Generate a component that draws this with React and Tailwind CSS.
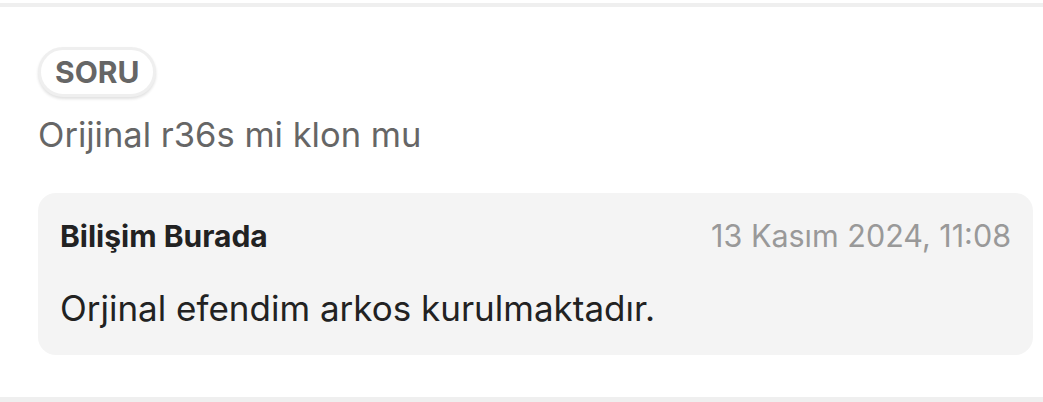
import React from "react";

const App = () => {
    return (
        <div className="w-[1043px] h-[402px] bg-white overflow-hidden font-['Inter',sans-serif]">
            <div className="mt-[3px] h-[4px] bg-[#efefef]" />
            <div className="pl-[38px] pr-[10px] pt-[40px] pb-[42px]">
                <span className="inline-flex items-center justify-center h-[50px] px-[14px] rounded-full bg-white border-[3px] border-[#efefef] shadow-[0_2px_3px_rgba(0,0,0,0.12)] text-[30px] font-bold text-[#666] leading-none">
                    SORU
                </span>
                <p className="mt-[18px] text-[34.5px] leading-[40px] text-[#666]">
                    Orijinal r36s mi klon mu
                </p>
                <div className="mt-[38px] h-[162px] bg-[#f4f4f4] rounded-[18px] px-[22px] pt-[25px]">
                    <div className="flex items-center justify-between h-[36px]">
                        <span className="text-[30px] leading-[36px] font-bold text-[#222]">Bilişim Burada</span>
                        <span className="text-[30.5px] leading-[36px] text-[#999]">13 Kasım 2024, 11:08</span>
                    </div>
                    <p className="mt-[34px] text-[35px] text-[#222] leading-[40px]">
                        Orjinal efendim arkos kurulmaktadır.
                    </p>
                </div>
            </div>
            <div className="h-[5px] bg-[#efefef]" />
        </div>
    );
};

export default App;
